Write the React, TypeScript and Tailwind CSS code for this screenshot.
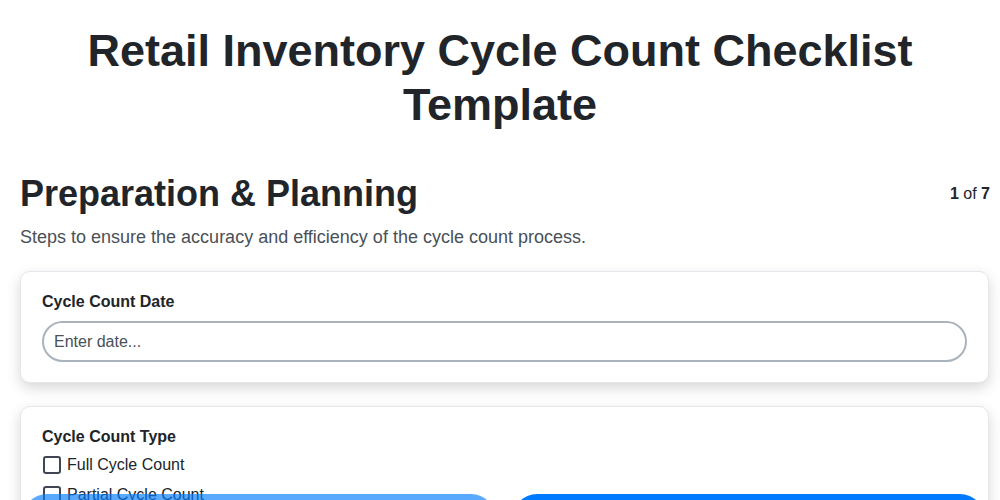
import React from "react";

export default function App() {
  return (
    <div className="min-h-screen bg-white text-[#212529] font-['Liberation_Sans',Arial,sans-serif]">
      <div className="pl-5 pr-[10px] pt-[24px] pb-[80px]">
        <h1 className="mr-[10px] text-center text-[45px] leading-[1.19] font-bold text-[#212529] m-0">
          Retail Inventory Cycle Count Checklist Template
        </h1>
        <div className="mt-[41px] flex items-center justify-between">
          <h2 className="text-[36px] leading-[1.2] font-bold text-[#212529]">Preparation &amp; Planning</h2>
          <div className="text-[16px] leading-6 text-[#212529]">
            <span className="font-bold">1</span> of <span className="font-bold">7</span>
          </div>
        </div>
        <p className="mt-[9px] text-[18px] leading-[27px] text-[#495057]">
          Steps to ensure the accuracy and efficiency of the cycle count process.
        </p>

        <div className="mt-[20px] mr-[1px] rounded-[10px] border border-[#e6e6ec] bg-white px-[21px] pt-[20px] pb-5 shadow-[0_5px_14px_rgba(0,0,0,0.16)]">
          <label className="block text-[16px] leading-[1.2] font-bold text-[#212529] mb-[10px]">Cycle Count Date</label>
          <input
            type="text"
            placeholder="Enter date..."
            className="block w-full h-[41px] rounded-full border-2 border-[#aab2bb] px-[10px] text-[16px] text-[#495057] placeholder:text-[#495057] outline-none bg-white"
          />
        </div>

        <div className="mt-[23px] mr-[1px] rounded-[10px] border border-[#e6e6ec] bg-white px-[21px] pt-[20px] pb-5 shadow-[0_5px_14px_rgba(0,0,0,0.16)]">
          <div className="text-[16px] leading-[1.2] font-bold text-[#212529] mb-[6px]">Cycle Count Type</div>
          <div className="flex flex-col gap-1.5">
            {["Full Cycle Count", "Partial Cycle Count", "Spot Check"].map((t) => (
              <label key={t} className="flex items-center h-6 gap-[6px] text-[16px] text-[#212529]">
                <span className="ml-[1px] inline-block w-[18px] h-[18px] rounded-[3px] border-2 border-[#3f4552] bg-white" />
                <span>{t}</span>
              </label>
            ))}
          </div>
        </div>
      </div>

      <div className="fixed left-0 right-0 bottom-[-44px] flex gap-4 pl-[22px] pr-[15px]">
        <button className="flex-1 h-[50px] rounded-full bg-[#007bff] opacity-65 text-white text-[16px] font-bold">
          Previous
        </button>
        <button className="flex-1 h-[50px] rounded-full bg-[#007bff] text-white text-[16px] font-bold">
          Next
        </button>
      </div>
    </div>
  );
}
